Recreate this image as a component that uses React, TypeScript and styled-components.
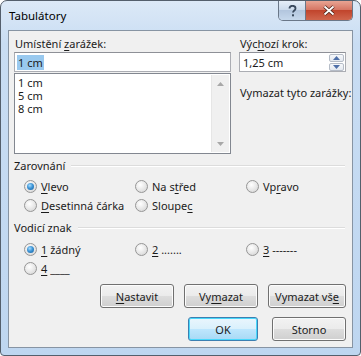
import React from 'react';
import styled, { createGlobalStyle, css } from 'styled-components';

const GlobalStyle = createGlobalStyle`
  html, body {
    margin: 0;
    padding: 0;
    background: #ffffff;
  }
  body {
    font-family: 'Noto Sans', 'Liberation Sans', sans-serif;
    font-size: 11px;
    color: #1b1b1b;
  }
`;

const Window = styled.div`
  width: 361px;
  height: 356px;
  box-sizing: border-box;
  border: 1px solid #545f6c;
  border-radius: 7px 7px 4px 4px;
  background: linear-gradient(180deg, #dce9f7 0%, #c9ddf3 12%, #bed6f0 100%);
  padding: 0 7px 7px;
  display: flex;
  flex-direction: column;
`;

const TitleBar = styled.div`
  height: 29px;
  display: flex;
  justify-content: space-between;
  align-items: flex-start;
`;

const Title = styled.div`
  margin: 7px 0 0 1px;
  font-size: 11.5px;
  line-height: 16px;
  color: #000;
`;

const CaptionGroup = styled.div`
  display: flex;
  height: 19px;
  border: 1px solid #6a7788;
  border-top: none;
  border-radius: 0 0 5px 5px;
  overflow: hidden;
`;

const CaptionButton = styled.div<{ $close?: boolean }>`
  display: flex;
  align-items: center;
  justify-content: center;
  width: 26px;
  background: linear-gradient(180deg, #e5eef8 0%, #ccdbec 45%, #b3c6de 50%, #c6d8ec 100%);
  ${(p) =>
    p.$close &&
    css`
      width: 46px;
      border-left: 1px solid #6a7788;
      background: linear-gradient(180deg, #e8a493 0%, #d67765 45%, #c1452d 50%, #d0664d 100%);
    `}
`;

const Client = styled.div`
  flex: 1;
  border: 1px solid #8794a3;
  background: #f0f0f0;
  padding: 5px 6px 0 5px;
  display: flex;
  flex-direction: column;
`;

const TopSection = styled.div`
  display: grid;
  grid-template-columns: 217px minmax(0, 1fr);
  column-gap: 8px;
`;

const Column = styled.div`
  display: flex;
  flex-direction: column;
  min-width: 0;
`;

const Label = styled.div<{ $gap?: number }>`
  height: 16px;
  line-height: 16px;
  padding-left: 1px;
  white-space: nowrap;
  margin-top: ${(p) => p.$gap ?? 0}px;
`;

const TextBox = styled.div`
  box-sizing: border-box;
  height: 20px;
  border: 1px solid #abadb3;
  border-top-color: #8e9097;
  background: #fff;
  display: flex;
  align-items: center;
  padding: 0 2px;
`;

const Selected = styled.span`
  background: #99c9ef;
  line-height: 15px;
  padding: 0 1px;
`;

const SpinText = styled.div`
  flex: 1;
  padding-left: 1px;
`;

const SpinButtons = styled.div`
  display: flex;
  flex-direction: column;
  gap: 1px;
  margin-right: -1px;
`;

const SpinButton = styled.div`
  width: 15px;
  height: 8px;
  box-sizing: border-box;
  border: 1px solid #b5bcc7;
  border-radius: 2px;
  background: linear-gradient(180deg, #f6f8fb 0%, #e3e8ef 100%);
  display: flex;
  align-items: center;
  justify-content: center;
`;

const ListBox = styled.div`
  box-sizing: border-box;
  height: 81px;
  margin-top: 1px;
  border: 1px solid #828790;
  background: #fff;
  display: flex;
`;

const ListItems = styled.div`
  flex: 1;
  padding: 2px 0 0 3px;
  line-height: 13px;
`;

const ScrollBar = styled.div`
  width: 17px;
  margin: 1px 1px 1px 0;
  background: #f0f0f0;
  border-left: 1px solid #e6e6e6;
  display: flex;
  flex-direction: column;
  justify-content: space-between;
  align-items: center;
  padding: 7px 0 6px;
`;

const GroupHeader = styled.div<{ $top: number }>`
  display: flex;
  align-items: center;
  gap: 6px;
  height: 15px;
  line-height: 15px;
  margin-top: ${(p) => p.$top}px;
  padding-right: 1px;
  &::after {
    content: '';
    flex: 1;
    height: 1px;
    background: #dcdcdc;
    border-bottom: 1px solid #fff;
  }
`;

const RadioGrid = styled.div<{ $top: number }>`
  display: grid;
  grid-template-columns: 111px 111px 1fr;
  grid-auto-rows: 19px;
  padding-left: 10px;
  margin-top: ${(p) => p.$top}px;
`;

const RadioItem = styled.div`
  display: flex;
  align-items: center;
  gap: 4px;
  white-space: nowrap;
`;

const RadioCircle = styled.span<{ $checked?: boolean }>`
  position: relative;
  width: 13px;
  height: 13px;
  box-sizing: border-box;
  border-radius: 50%;
  border: 1px solid #969696;
  background: radial-gradient(circle at 40% 35%, #ffffff 0%, #e6e6e6 55%, #cfcfcf 100%);
  flex: none;
  ${(p) =>
    p.$checked &&
    css`
      &::after {
        content: '';
        position: absolute;
        left: 2px;
        top: 2px;
        width: 7px;
        height: 7px;
        border-radius: 50%;
        background: radial-gradient(circle at 40% 35%, #a6dcff 0%, #3e95d6 45%, #0f5a9c 100%);
      }
    `}
`;

const U = styled.span`
  text-decoration: underline;
  text-underline-offset: 2px;
`;

const ButtonRow = styled.div<{ $top: number; $gap: number }>`
  display: flex;
  justify-content: flex-end;
  gap: ${(p) => p.$gap}px;
  margin-top: ${(p) => p.$top}px;
`;

const Button = styled.div<{ $w: number; $default?: boolean }>`
  box-sizing: border-box;
  width: ${(p) => p.$w}px;
  height: 24px;
  border: 1px solid #707070;
  border-radius: 3px;
  box-shadow: inset 0 0 0 1px #fcfcfc;
  background: linear-gradient(180deg, #f2f2f2 0%, #ebebeb 50%, #dddddd 51%, #cfcfcf 100%);
  display: flex;
  align-items: center;
  justify-content: center;
  white-space: nowrap;
  ${(p) =>
    p.$default &&
    css`
      border-color: #3c7fb1;
      box-shadow: inset 0 0 0 1px #48d8fb;
      background: linear-gradient(180deg, #eaf6fd 0%, #d9f0fc 50%, #bee6fd 51%, #a7d9f5 100%);
    `}
`;

const Arrow = ({ up, color }: { up?: boolean; color: string }) => (
  <svg width="7" height="4" viewBox="0 0 7 4">
    <path d={up ? 'M0 4 L3.5 0 L7 4 Z' : 'M0 0 L7 0 L3.5 4 Z'} fill={color} />
  </svg>
);

type RadioProps = { checked?: boolean; children: React.ReactNode };

const Radio = ({ checked, children }: RadioProps) => (
  <RadioItem>
    <RadioCircle $checked={checked} />
    <span>{children}</span>
  </RadioItem>
);

export default function App() {
  return (
    <>
      <GlobalStyle />
      <Window>
        <TitleBar>
          <Title>Tabulátory</Title>
          <CaptionGroup>
            <CaptionButton>
              <svg width="9" height="12" viewBox="0 0 9 12">
                <path
                  d="M1.5 3.5 C1.5 1.5 3 0.8 4.5 0.8 C6.3 0.8 7.5 1.8 7.5 3.4 C7.5 5.4 5 5.6 5 7.6"
                  fill="none"
                  stroke="#3a4a5e"
                  strokeWidth="1.8"
                />
                <rect x="4" y="9.3" width="2" height="2" fill="#3a4a5e" />
              </svg>
            </CaptionButton>
            <CaptionButton $close>
              <svg width="12" height="11" viewBox="0 0 12 11">
                <path d="M1.5 1.5 L10.5 9.5 M10.5 1.5 L1.5 9.5" stroke="#4a2015" strokeWidth="3.4" />
                <path d="M1.5 1.5 L10.5 9.5 M10.5 1.5 L1.5 9.5" stroke="#ffffff" strokeWidth="1.8" />
              </svg>
            </CaptionButton>
          </CaptionGroup>
        </TitleBar>
        <Client>
          <TopSection>
            <Column>
              <Label>
                Umístění <U>z</U>arážek:
              </Label>
              <TextBox>
                <Selected>1 cm</Selected>
              </TextBox>
              <ListBox>
                <ListItems>
                  <div>1 cm</div>
                  <div>5 cm</div>
                  <div>8 cm</div>
                </ListItems>
                <ScrollBar>
                  <Arrow up color="#a8a8a8" />
                  <Arrow color="#a8a8a8" />
                </ScrollBar>
              </ListBox>
            </Column>
            <Column>
              <Label>
                Výc<U>h</U>ozí krok:
              </Label>
              <TextBox>
                <SpinText>1,25 cm</SpinText>
                <SpinButtons>
                  <SpinButton>
                    <Arrow up color="#4e6fa8" />
                  </SpinButton>
                  <SpinButton>
                    <Arrow color="#4e6fa8" />
                  </SpinButton>
                </SpinButtons>
              </TextBox>
              <Label $gap={13}>Vymazat tyto zarážky:</Label>
            </Column>
          </TopSection>

          <GroupHeader $top={4}>Zarovnání</GroupHeader>
          <RadioGrid $top={4}>
            <Radio checked>
              <U>V</U>levo
            </Radio>
            <Radio>
              Na s<U>t</U>řed
            </Radio>
            <Radio>
              Vp<U>r</U>avo
            </Radio>
            <Radio>
              <U>D</U>esetinná čárka
            </Radio>
            <Radio>
              Sloupe<U>c</U>
            </Radio>
          </RadioGrid>

          <GroupHeader $top={5}>Vodicí znak</GroupHeader>
          <RadioGrid $top={5}>
            <Radio checked>
              <U>1</U> žádný
            </Radio>
            <Radio>
              <U>2</U> .......
            </Radio>
            <Radio>
              <U>3</U> -------
            </Radio>
            <Radio>
              <U>4</U> ____
            </Radio>
          </RadioGrid>

          <ButtonRow $top={6} $gap={10}>
            <Button $w={74}>
              <U>N</U>astavit
            </Button>
            <Button $w={74}>
              Vy<U>m</U>azat
            </Button>
            <Button $w={78}>
              Vymazat vš<U>e</U>
            </Button>
          </ButtonRow>
          <ButtonRow $top={9} $gap={14}>
            <Button $w={70} $default>
              OK
            </Button>
            <Button $w={74}>Storno</Button>
          </ButtonRow>
        </Client>
      </Window>
    </>
  );
}
